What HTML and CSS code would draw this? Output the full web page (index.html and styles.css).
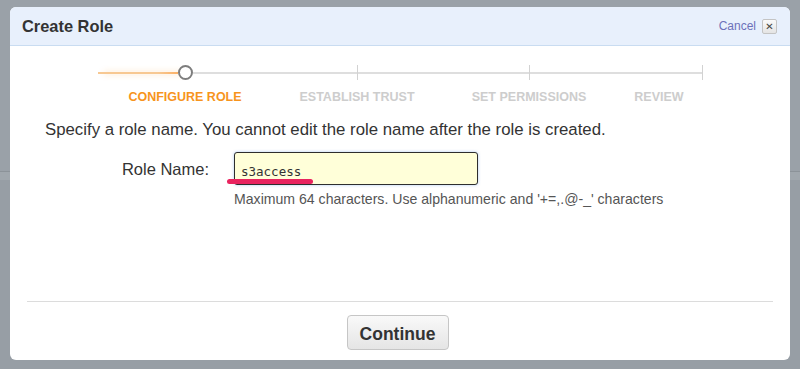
FILE: index.html
```html
<!DOCTYPE html>
<html lang="en">
<head>
  <meta charset="UTF-8" />
  <title>Create Role</title>
  <link rel="stylesheet" href="styles.css">
</head>
<body>

  <div class="dialog">
    <div class="dialog-header">
      <h2>Create Role</h2>
      <div class="header-actions">
        <a href="#" class="cancel">Cancel</a>
        <span class="close-btn">&#x2715;</span>
      </div>
    </div>

    <div class="dialog-body">
      <div class="steps-track">
        <span class="seg done"></span>
        <span class="dot"></span>
        <span class="seg s1"></span>
        <span class="tick"></span>
        <span class="seg s2"></span>
        <span class="tick"></span>
        <span class="seg s3"></span>
        <span class="tick"></span>
      </div>
      <div class="step-labels">
        <span class="active">CONFIGURE ROLE</span>
        <span>ESTABLISH TRUST</span>
        <span>SET PERMISSIONS</span>
        <span>REVIEW</span>
      </div>

      <p class="intro">Specify a role name. You cannot edit the role name after the role is created.</p>

      <div class="field">
        <label for="roleName">Role Name:</label>
        <div class="input-wrap">
          <input type="text" id="roleName" value="s3access" />
          <span class="marker"></span>
          <div class="hint">Maximum 64 characters. Use alphanumeric and '+=,.@-_' characters</div>
        </div>
      </div>
    </div>

    <div class="dialog-footer">
      <button type="button">Continue</button>
    </div>
  </div>

</body>
</html>
```

FILE: styles.css
```css
* {
  box-sizing: border-box;
  margin: 0;
  padding: 0;
}

body {
  font-family: 'Liberation Sans', Arial, sans-serif;
  background: linear-gradient(to bottom, #9aa1a8 0, #9aa1a8 171px, #8c9399 171px, #8c9399 172px, #a0a7ad 172px, #a0a7ad 180px, #979ea5 180px);
  height: 369px;
  padding: 7px 10px 0;
  overflow: hidden;
}

.dialog {
  width: 780px;
  height: 353px;
  background: #fff;
  border-radius: 6px;
  overflow: hidden;
  display: flex;
  flex-direction: column;
}

.dialog-header {
  height: 39px;
  background: #e8f0fc;
  border-bottom: 1px solid #c9dcf1;
  display: flex;
  align-items: center;
  justify-content: space-between;
  padding: 0 13px 0 12px;
}

.dialog-header h2 {
  font-size: 16.4px;
  font-weight: bold;
  color: #333;
  margin-top: 1px;
}

.header-actions {
  display: flex;
  align-items: center;
  gap: 6px;
}

.cancel {
  color: #6d71b9;
  font-size: 12px;
  text-decoration: none;
}

.close-btn {
  width: 15px;
  height: 15px;
  border: 1px solid #c4c4c4;
  border-radius: 2px;
  background: linear-gradient(#fafafa, #e4e4e4);
  color: #444;
  font-size: 10px;
  font-weight: bold;
  display: flex;
  align-items: center;
  justify-content: center;
  font-family: 'DejaVu Sans', sans-serif;
}

.dialog-body {
  flex: 1;
  padding: 19px 0 0;
}

/* wizard steps */
.steps-track {
  display: flex;
  align-items: center;
  height: 15px;
  margin-left: 88px;
}

.seg {
  height: 2px;
  background: #dedede;
}

.seg.done {
  width: 80px;
  background: linear-gradient(to right, #f7c892 0, #f7c892 60px, #fbb065 100%);
  box-shadow: 6px 0 6px rgba(247, 148, 29, 0.35);
}

.dot {
  width: 15px;
  height: 15px;
  border: 2px solid #7d7d7d;
  border-radius: 50%;
  background: #fff;
}

.seg.s1 { width: 164px; }
.seg.s2 { width: 171px; }
.seg.s3 { width: 172px; }

.tick {
  width: 1px;
  height: 15px;
  background: #d2d2d2;
}

.step-labels {
  display: grid;
  grid-template-columns: 172px 172px 172px 88px;
  margin: 10px 0 0 89px;
}

.step-labels span {
  text-align: center;
  font-size: 12.5px;
  font-weight: bold;
  color: #cdcdcd;
}

.step-labels .active {
  color: #f7941d;
}

.intro {
  font-size: 16.8px;
  color: #333;
  margin: 16px 0 0 35px;
}

.field {
  display: flex;
  align-items: flex-start;
  margin-top: 12px;
}

.field label {
  width: 199px;
  text-align: right;
  font-size: 16.5px;
  color: #333;
  padding-top: 8px;
}

.input-wrap {
  position: relative;
  margin-left: 25px;
}

.input-wrap input {
  width: 244px;
  height: 33px;
  border: 1px solid #2e2e2e;
  border-radius: 3px;
  background: #ffffd9;
  box-shadow: 0 0 3px rgba(90, 150, 230, 0.5);
  font-family: 'DejaVu Sans Mono', monospace;
  font-size: 12.5px;
  color: #333;
  padding: 6px 6px 0;
  outline: none;
}

.marker {
  position: absolute;
  left: -7px;
  top: 27px;
  width: 86px;
  height: 5px;
  border-radius: 3px;
  background: #e9245f;
}

.hint {
  font-size: 14.1px;
  color: #555;
  margin-top: 6px;
  white-space: nowrap;
}

.dialog-footer {
  margin: 0 17px;
  border-top: 1px solid #dcdcdc;
  height: 59px;
  display: flex;
  justify-content: center;
  padding-top: 13px;
}

.dialog-footer button {
  width: 102px;
  height: 35px;
  font-family: 'Liberation Sans', Arial, sans-serif;
  font-size: 17.5px;
  font-weight: bold;
  color: #333;
  background: linear-gradient(#f9f9f9, #e5e5e5);
  border: 1px solid #c6c6c6;
  border-radius: 4px;
  margin-left: -5px;
  padding-top: 3px;
}
```
